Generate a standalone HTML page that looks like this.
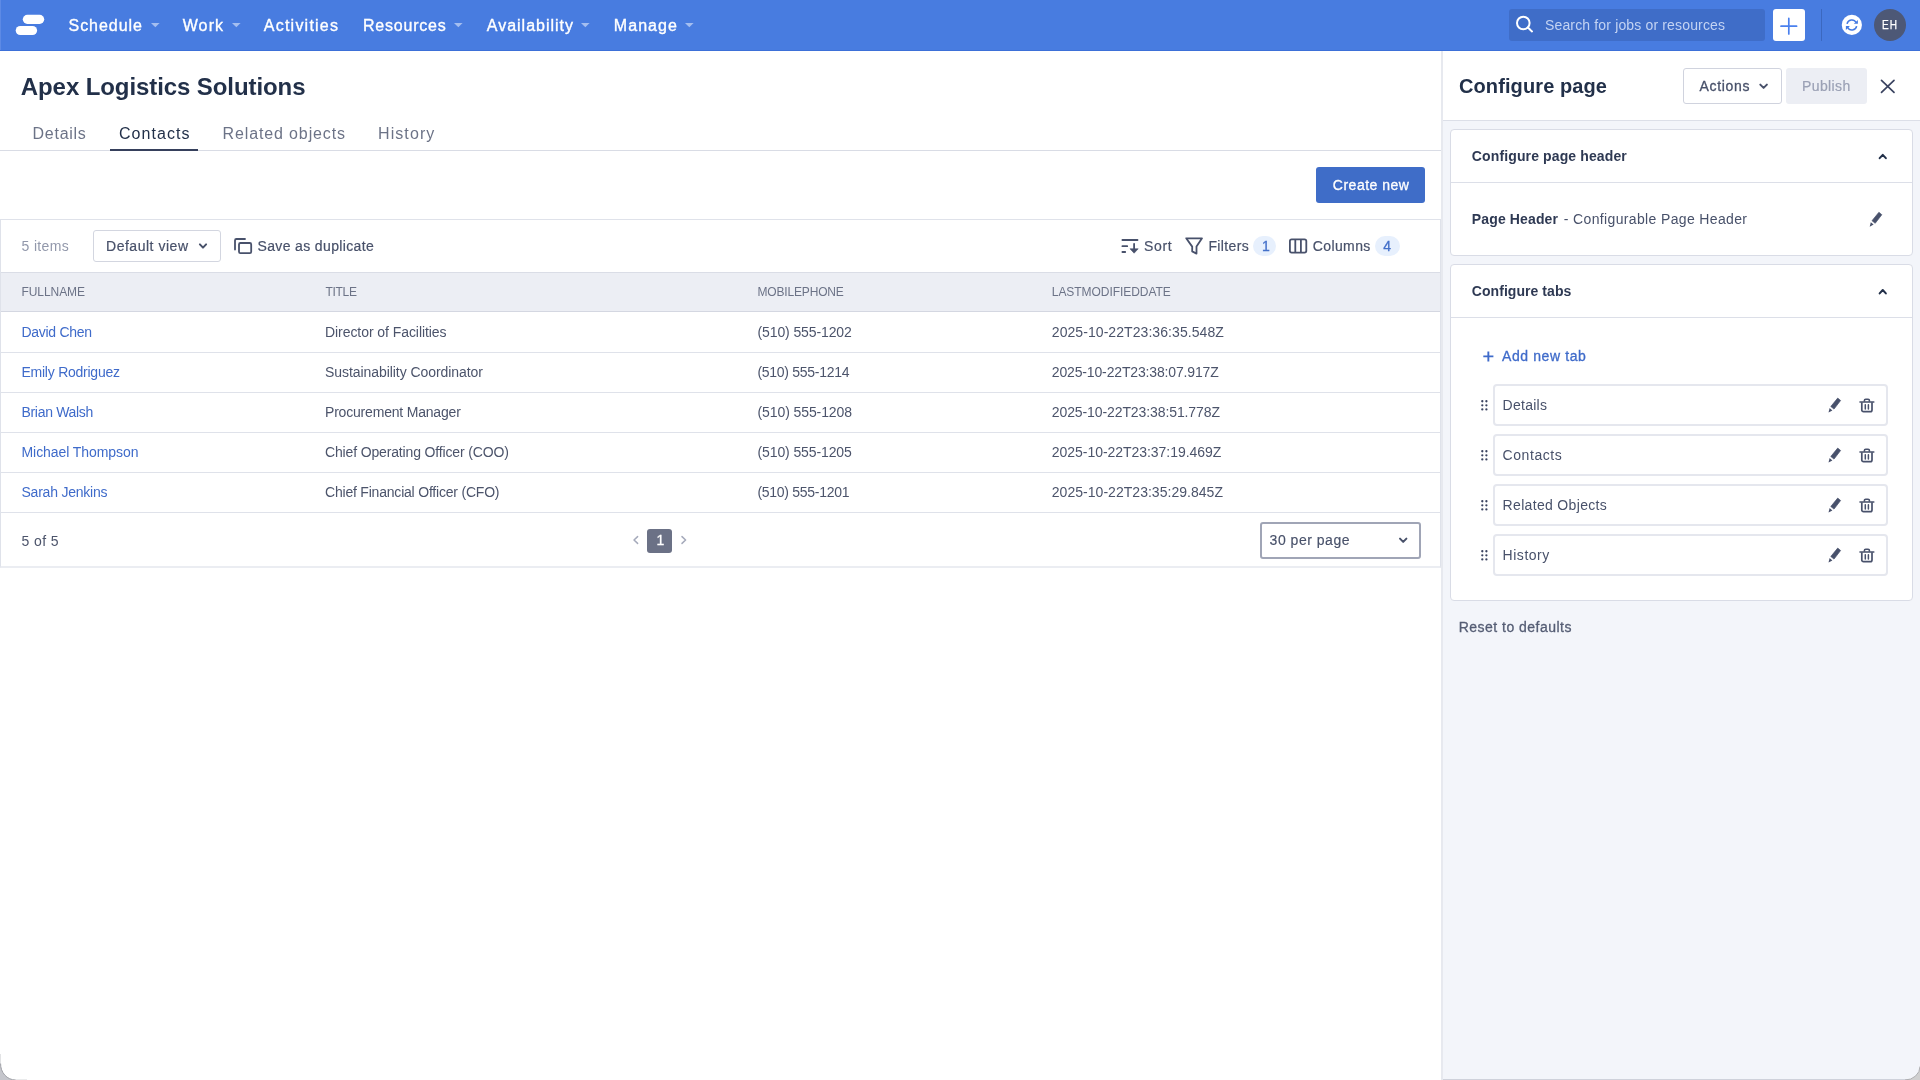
<!DOCTYPE html>
<html lang="en"><head><meta charset="utf-8"><title>Apex Logistics Solutions - Contacts</title><style>
html,body{margin:0;padding:0;}
body{width:1920px;height:1080px;overflow:hidden;background:#fff;position:relative;font-family:"Liberation Sans",sans-serif;}
.t{position:absolute;white-space:nowrap;line-height:1;display:block;}
</style></head>
<body>
<header style="will-change:transform;position:absolute;left:0;top:0;width:1920px;height:50px;background:#487ce0;border-bottom:1px solid #3d70d8;"><div style="position:absolute;left:0.00px;top:0.00px;width:1.00px;height:50.00px;background:#5d8ae5;"></div><svg style="position:absolute;left:15.00px;top:14.00px;overflow:visible;" width="30" height="22" viewBox="15 14 30 22" fill="none"><rect x="22.8" y="14.8" width="21.4" height="9.1" rx="4.55" fill="#fff"/><rect x="15.7" y="25.95" width="21.4" height="9.1" rx="4.55" fill="#fff"/></svg><span class="t" id="n0" style="left:68.50px;top:18.00px;font-size:16px;color:#fff;letter-spacing:0.969px;-webkit-text-stroke:0.35px #fff;">Schedule</span><svg style="position:absolute;left:151.20px;top:22.90px;overflow:visible;" width="9" height="4.5" viewBox="151.2 22.9 9 4.5" fill="none"><path d="M151.2,22.9 h8.6 l-4.3,4.3 z" fill="#fff" fill-opacity=".5"/></svg><span class="t" id="n1" style="left:182.70px;top:18.00px;font-size:16px;color:#fff;letter-spacing:1.118px;-webkit-text-stroke:0.35px #fff;">Work</span><svg style="position:absolute;left:231.60px;top:22.90px;overflow:visible;" width="9" height="4.5" viewBox="231.6 22.9 9 4.5" fill="none"><path d="M231.6,22.9 h8.6 l-4.3,4.3 z" fill="#fff" fill-opacity=".5"/></svg><span class="t" id="n2" style="left:263.80px;top:18.00px;font-size:16px;color:#fff;letter-spacing:1.231px;-webkit-text-stroke:0.35px #fff;">Activities</span><span class="t" id="n3" style="left:363.00px;top:18.00px;font-size:16px;color:#fff;letter-spacing:0.777px;-webkit-text-stroke:0.35px #fff;">Resources</span><svg style="position:absolute;left:453.90px;top:22.90px;overflow:visible;" width="9" height="4.5" viewBox="453.9 22.9 9 4.5" fill="none"><path d="M453.9,22.9 h8.6 l-4.3,4.3 z" fill="#fff" fill-opacity=".5"/></svg><span class="t" id="n4" style="left:486.80px;top:18.00px;font-size:16px;color:#fff;letter-spacing:0.991px;-webkit-text-stroke:0.35px #fff;">Availability</span><svg style="position:absolute;left:581.20px;top:22.90px;overflow:visible;" width="9" height="4.5" viewBox="581.2 22.9 9 4.5" fill="none"><path d="M581.2,22.9 h8.6 l-4.3,4.3 z" fill="#fff" fill-opacity=".5"/></svg><span class="t" id="n5" style="left:613.80px;top:18.00px;font-size:16px;color:#fff;letter-spacing:1.054px;-webkit-text-stroke:0.35px #fff;">Manage</span><svg style="position:absolute;left:685.40px;top:22.90px;overflow:visible;" width="9" height="4.5" viewBox="685.4 22.9 9 4.5" fill="none"><path d="M685.4,22.9 h8.6 l-4.3,4.3 z" fill="#fff" fill-opacity=".5"/></svg><div style="position:absolute;left:1508.50px;top:9.20px;width:256.00px;height:31.60px;background:#3f6dc8;border-radius:3px;"></div><svg style="position:absolute;left:1515.00px;top:15.00px;overflow:visible;" width="19" height="19" viewBox="1515 15 19 19" fill="none"><circle cx="1523.3" cy="23" r="6.3" stroke="#fff" stroke-width="2"/><path d="M1527.9,27.6 L1532,31.4" stroke="#fff" stroke-width="2" stroke-linecap="round"/></svg><span class="t" id="nsearch" style="left:1545.00px;top:18.00px;font-size:14px;color:#c3d3f3;letter-spacing:0.153px;">Search for jobs or resources</span><div style="position:absolute;left:1772.70px;top:9.10px;width:32.00px;height:31.80px;background:#fff;border-radius:3px;"></div><svg style="position:absolute;left:1780.00px;top:18.00px;overflow:visible;" width="18" height="18" viewBox="1780 18 18 18" fill="none"><path d="M1781,26.2 H1796.6 M1788.8,18.4 V34" stroke="#4a80ee" stroke-width="1.7" stroke-linecap="round"/></svg><div style="position:absolute;left:1820.80px;top:9.20px;width:1.00px;height:31.60px;background:#3b68c0;"></div><svg style="position:absolute;left:1841.00px;top:14.00px;overflow:visible;" width="22" height="22" viewBox="1841 14 22 22" fill="none"><circle cx="1851.85" cy="24.95" r="10.1" fill="#fff"/><path d="M1847.05,23.8 A4.85,4.85 0 0 1 1856.1,22.5" stroke="#447ae2" stroke-width="1.5"/><path d="M1857.9,20 V23.8 H1853.8 Z" fill="#447ae2"/><path d="M1856.65,26.1 A4.85,4.85 0 0 1 1847.6,27.4" stroke="#447ae2" stroke-width="1.5"/><path d="M1845.9,29.9 V26.1 H1849.9 Z" fill="#447ae2"/></svg><div style="position:absolute;left:1873.80px;top:8.90px;width:32.10px;height:32.10px;background:#4d5876;border-radius:50%;"></div><span class="t" id="nav_eh" style="left:1882.30px;top:19.00px;font-size:12px;color:#fff;letter-spacing:1.096px;-webkit-text-stroke:0.25px #fff;transform:scaleX(.84);transform-origin:0 50%;">EH</span></header>
<main style="will-change:transform;position:absolute;left:0;top:51px;width:1441px;height:1029px;background:#fff;"><span class="t" id="title" style="left:20.80px;top:24.00px;font-size:24px;color:#223049;letter-spacing:-0.087px;font-weight:700;">Apex Logistics Solutions</span><span class="t" id="tab0" style="left:32.60px;top:75.00px;font-size:16px;color:#6c7387;letter-spacing:0.716px;">Details</span><span class="t" id="tab1" style="left:119.00px;top:75.00px;font-size:16px;color:#223049;letter-spacing:1.037px;">Contacts</span><span class="t" id="tab2" style="left:222.60px;top:75.00px;font-size:16px;color:#6c7387;letter-spacing:0.865px;">Related objects</span><span class="t" id="tab3" style="left:378.00px;top:75.00px;font-size:16px;color:#6c7387;letter-spacing:1.086px;">History</span><div style="position:absolute;left:0.00px;top:99.00px;width:1441.00px;height:1.00px;background:#d9dce5;"></div><div style="position:absolute;left:110.00px;top:97.80px;width:88.10px;height:1.90px;background:#36405c;"></div><div style="position:absolute;left:1316.20px;top:116.20px;width:109.20px;height:35.80px;background:#3f6dc8;border-radius:3px;"><span class="t" id="createnew" style="left:16.60px;top:10.80px;font-size:14px;color:#fff;letter-spacing:0.512px;-webkit-text-stroke:0.3px #fff;">Create new</span></div><section style="position:absolute;left:0.00px;top:168.00px;width:1439.00px;height:346.00px;border:1px solid #dfe2ea;border-bottom:2px solid #ebedf2;background:#fff;"><span class="t" id="items5" style="left:20.50px;top:19.00px;font-size:14px;color:#9298ab;letter-spacing:0.362px;">5 items</span><div style="position:absolute;left:92.00px;top:10.30px;width:126.00px;height:29.40px;border:1px solid #d3d6e0;border-radius:3px;background:#fff;"></div><span class="t" id="defview" style="left:105.00px;top:19.00px;font-size:14px;color:#48516a;letter-spacing:0.521px;-webkit-text-stroke:0.2px #48516a;">Default view</span><svg style="position:absolute;left:197.00px;top:22.00px;overflow:visible;" width="10" height="8" viewBox="198 242 10 8" fill="none"><path d="M199.9,244.4 L203,247.6 L206.1,244.4" stroke="#48516a" stroke-width="2" stroke-linecap="round" stroke-linejoin="round"/></svg><svg style="position:absolute;left:232.00px;top:17.00px;overflow:visible;" width="20" height="18" viewBox="233 237 20 18" fill="none"><path d="M235,249.6 V240.4 a1.4,1.4 0 0 1 1.4,-1.4 H245" stroke="#48516b" stroke-width="1.8" stroke-linecap="round"/><rect x="239" y="243" width="12.2" height="10.1" rx="1.4" stroke="#48516b" stroke-width="1.8"/></svg><span class="t" id="savedup" style="left:256.50px;top:19.00px;font-size:14px;color:#48516a;letter-spacing:0.361px;-webkit-text-stroke:0.2px #48516a;">Save as duplicate</span><svg style="position:absolute;left:1120.00px;top:18.00px;overflow:visible;" width="18" height="16" viewBox="1121 238 18 16" fill="none"><path d="M1122.4,240 H1137.5 M1122.4,246.2 H1127.2 M1122.4,252 H1125.2 M1134.1,243.8 V250" stroke="#48516b" stroke-width="1.8" stroke-linecap="round"/><path d="M1130,248.8 H1138.2 L1134.1,253.2 Z" fill="#48516b" stroke="#48516b" stroke-width=".6" stroke-linejoin="round"/></svg><span class="t" id="sort" style="left:1143.00px;top:19.00px;font-size:14px;color:#48516a;letter-spacing:0.671px;-webkit-text-stroke:0.2px #48516a;">Sort</span><svg style="position:absolute;left:1184.00px;top:17.00px;overflow:visible;" width="18" height="18" viewBox="1185 237 18 18" fill="none"><path d="M1186.2,238.3 H1202 L1196.5,246.6 V253.6 L1192.2,251.4 V246.6 Z" stroke="#48516b" stroke-width="1.8" stroke-linejoin="round"/></svg><span class="t" id="filters" style="left:1207.40px;top:19.00px;font-size:14px;color:#48516a;letter-spacing:0.362px;-webkit-text-stroke:0.2px #48516a;">Filters</span><div style="position:absolute;left:1252.30px;top:16.00px;width:23.00px;height:20.00px;background:#e7f0fd;border-radius:10px;"></div><span class="t" id="b1" style="left:1261.00px;top:19.00px;font-size:14px;color:#4470c9;letter-spacing:0.000px;-webkit-text-stroke:0.3px #4470c9;">1</span><svg style="position:absolute;left:1287.00px;top:18.00px;overflow:visible;" width="20" height="16" viewBox="1288 238 20 16" fill="none"><rect x="1289.9" y="239.3" width="16.4" height="13.3" rx="1.8" stroke="#48516b" stroke-width="1.8"/><path d="M1295.3,239.3 V252.6 M1300.9,239.3 V252.6" stroke="#48516b" stroke-width="1.8"/></svg><span class="t" id="columns" style="left:1311.80px;top:19.00px;font-size:14px;color:#48516a;letter-spacing:0.375px;-webkit-text-stroke:0.2px #48516a;">Columns</span><div style="position:absolute;left:1374.30px;top:16.00px;width:25.00px;height:20.00px;background:#e7f0fd;border-radius:10px;"></div><span class="t" id="b4" style="left:1382.30px;top:19.00px;font-size:14px;color:#4470c9;letter-spacing:0.000px;-webkit-text-stroke:0.3px #4470c9;">4</span><div style="position:absolute;left:0.00px;top:52.00px;width:1439.00px;height:39.50px;background:#eceef4;border-top:1px solid #dadde6;border-bottom:1px solid #d4d7e1;box-sizing:border-box;"></div><span class="t" id="h0" style="left:20.50px;top:66.00px;font-size:12px;color:#6c7387;letter-spacing:-0.074px;">FULLNAME</span><span class="t" id="h1" style="left:324.50px;top:66.00px;font-size:12px;color:#6c7387;letter-spacing:-0.293px;">TITLE</span><span class="t" id="h2" style="left:756.50px;top:66.00px;font-size:12px;color:#6c7387;letter-spacing:-0.173px;">MOBILEPHONE</span><span class="t" id="h3" style="left:1050.80px;top:66.00px;font-size:12px;color:#6c7387;letter-spacing:-0.053px;">LASTMODIFIEDDATE</span><span class="t" id="r0a" style="left:20.50px;top:105.00px;font-size:14px;color:#3f6bca;letter-spacing:-0.295px;">David Chen</span><span class="t" id="r0b" style="left:324.00px;top:105.00px;font-size:14px;color:#4c546b;letter-spacing:-0.063px;">Director of Facilities</span><span class="t" id="r0c" style="left:756.50px;top:105.00px;font-size:14px;color:#4c546b;letter-spacing:-0.112px;">(510) 555-1202</span><span class="t" id="r0d" style="left:1050.80px;top:105.00px;font-size:14px;color:#4c546b;letter-spacing:0.067px;">2025-10-22T23:36:35.548Z</span><div style="position:absolute;left:0.00px;top:132.00px;width:1439.00px;height:1.00px;background:#dfe2ea;"></div><span class="t" id="r1a" style="left:20.50px;top:145.00px;font-size:14px;color:#3f6bca;letter-spacing:-0.246px;">Emily Rodriguez</span><span class="t" id="r1b" style="left:324.00px;top:145.00px;font-size:14px;color:#4c546b;letter-spacing:-0.061px;">Sustainability Coordinator</span><span class="t" id="r1c" style="left:756.50px;top:145.00px;font-size:14px;color:#4c546b;letter-spacing:-0.288px;">(510) 555-1214</span><span class="t" id="r1d" style="left:1050.80px;top:145.00px;font-size:14px;color:#4c546b;letter-spacing:-0.151px;">2025-10-22T23:38:07.917Z</span><div style="position:absolute;left:0.00px;top:172.00px;width:1439.00px;height:1.00px;background:#dfe2ea;"></div><span class="t" id="r2a" style="left:20.50px;top:185.00px;font-size:14px;color:#3f6bca;letter-spacing:-0.315px;">Brian Walsh</span><span class="t" id="r2b" style="left:324.00px;top:185.00px;font-size:14px;color:#4c546b;letter-spacing:-0.194px;">Procurement Manager</span><span class="t" id="r2c" style="left:756.50px;top:185.00px;font-size:14px;color:#4c546b;letter-spacing:-0.096px;">(510) 555-1208</span><span class="t" id="r2d" style="left:1050.80px;top:185.00px;font-size:14px;color:#4c546b;letter-spacing:-0.099px;">2025-10-22T23:38:51.778Z</span><div style="position:absolute;left:0.00px;top:212.00px;width:1439.00px;height:1.00px;background:#dfe2ea;"></div><span class="t" id="r3a" style="left:20.50px;top:225.00px;font-size:14px;color:#3f6bca;letter-spacing:-0.069px;">Michael Thompson</span><span class="t" id="r3b" style="left:324.00px;top:225.00px;font-size:14px;color:#4c546b;letter-spacing:-0.151px;">Chief Operating Officer (COO)</span><span class="t" id="r3c" style="left:756.50px;top:225.00px;font-size:14px;color:#4c546b;letter-spacing:-0.112px;">(510) 555-1205</span><span class="t" id="r3d" style="left:1050.80px;top:225.00px;font-size:14px;color:#4c546b;letter-spacing:-0.042px;">2025-10-22T23:37:19.469Z</span><div style="position:absolute;left:0.00px;top:252.00px;width:1439.00px;height:1.00px;background:#dfe2ea;"></div><span class="t" id="r4a" style="left:20.50px;top:265.00px;font-size:14px;color:#3f6bca;letter-spacing:-0.227px;">Sarah Jenkins</span><span class="t" id="r4b" style="left:324.00px;top:265.00px;font-size:14px;color:#4c546b;letter-spacing:-0.205px;">Chief Financial Officer (CFO)</span><span class="t" id="r4c" style="left:756.50px;top:265.00px;font-size:14px;color:#4c546b;letter-spacing:-0.288px;">(510) 555-1201</span><span class="t" id="r4d" style="left:1050.80px;top:265.00px;font-size:14px;color:#4c546b;letter-spacing:0.032px;">2025-10-22T23:35:29.845Z</span><div style="position:absolute;left:0.00px;top:292.00px;width:1439.00px;height:1.00px;background:#dfe2ea;"></div><span class="t" id="of5" style="left:20.50px;top:314.00px;font-size:14px;color:#4c546b;letter-spacing:0.394px;">5 of 5</span><svg style="position:absolute;left:631.00px;top:315.00px;overflow:visible;" width="8" height="10" viewBox="632 535 8 10" fill="none"><path d="M637.6,536.6 L634,540 L637.6,543.4" stroke="#a5aabb" stroke-width="1.5" stroke-linecap="round" stroke-linejoin="round"/></svg><div style="position:absolute;left:646.00px;top:308.60px;width:24.50px;height:24.00px;background:#6b7186;border-radius:3px;"></div><span class="t" id="pg1" style="left:655.50px;top:313.00px;font-size:14px;color:#fff;letter-spacing:0.000px;-webkit-text-stroke:0.3px #fff;">1</span><svg style="position:absolute;left:679.00px;top:315.00px;overflow:visible;" width="8" height="10" viewBox="680 535 8 10" fill="none"><path d="M682,536.6 L685.6,540 L682,543.4" stroke="#a5aabb" stroke-width="1.5" stroke-linecap="round" stroke-linejoin="round"/></svg><div style="position:absolute;left:1259.00px;top:302.00px;width:156.50px;height:32.50px;border:2px solid #a0a5b6;border-radius:3px;background:#fff;"></div><span class="t" id="perpage" style="left:1268.60px;top:313.00px;font-size:14px;color:#48516a;letter-spacing:0.517px;-webkit-text-stroke:0.15px #48516a;">30 per page</span><svg style="position:absolute;left:1397.00px;top:316.00px;overflow:visible;" width="10" height="8" viewBox="1398 536 10 8" fill="none"><path d="M1400,538.6 L1403.2,541.9 L1406.4,538.6" stroke="#48516a" stroke-width="2" stroke-linecap="round" stroke-linejoin="round"/></svg></section></main>
<aside style="will-change:transform;position:absolute;left:1441px;top:51px;width:477px;height:1029px;background:#f3f5fa;border-left:2px solid #e7e9ef;"><div style="position:absolute;left:0.00px;top:0.00px;width:477.00px;height:69.00px;background:#fff;border-bottom:1px solid #dcdfe8;"></div><span class="t" id="cfgpage" style="left:16.00px;top:25.00px;font-size:20px;color:#223049;letter-spacing:0.102px;font-weight:700;">Configure page</span><div style="position:absolute;left:239.50px;top:17.20px;width:97.20px;height:33.60px;border:1px solid #d0d3de;border-radius:3px;background:#fff;"></div><span class="t" id="actions" style="left:256.50px;top:28.00px;font-size:14px;color:#48516a;letter-spacing:0.696px;-webkit-text-stroke:0.3px #48516a;">Actions</span><svg style="position:absolute;left:316.00px;top:32.00px;overflow:visible;" width="10" height="8" viewBox="1759 83 10 8" fill="none"><path d="M1760.3,84.6 L1763.6,87.9 L1766.9,84.6" stroke="#48516a" stroke-width="2" stroke-linecap="round" stroke-linejoin="round"/></svg><div style="position:absolute;left:342.80px;top:17.20px;width:81.00px;height:35.60px;background:#eceef4;border-radius:3px;"></div><span class="t" id="publish" style="left:359.00px;top:28.00px;font-size:14px;color:#9ba1b5;letter-spacing:0.396px;-webkit-text-stroke:0.2px #9ba1b5;">Publish</span><svg style="position:absolute;left:437.00px;top:28.00px;overflow:visible;" width="16" height="15" viewBox="1880 79 16 15" fill="none"><path d="M1881.5,80.3 L1894,92.3 M1894,80.3 L1881.5,92.3" stroke="#3a4360" stroke-width="1.7" stroke-linecap="round"/></svg><section style="position:absolute;left:7.00px;top:78.00px;width:461.00px;height:125.00px;border:1px solid #d9dce6;border-radius:4px;background:#fff;"><span class="t" id="cph" style="left:20.80px;top:19.00px;font-size:14px;color:#2e3953;letter-spacing:0.127px;font-weight:700;">Configure page header</span><svg style="position:absolute;left:427.00px;top:23.00px;overflow:visible;" width="10" height="8" viewBox="1878 153 10 8" fill="none"><path d="M1879.65,158.20 L1882.75,154.80 L1885.85,158.20" stroke="#223049" stroke-width="2" stroke-linecap="round" stroke-linejoin="round"/></svg><div style="position:absolute;left:0.00px;top:52.00px;width:461.00px;height:1.00px;background:#dcdfe8;"></div><span class="t" id="ph" style="left:20.80px;top:82.00px;font-size:14px;color:#2e3953;letter-spacing:0.137px;font-weight:700;">Page Header</span><span class="t" id="ph2" style="left:112.80px;top:82.00px;font-size:14px;color:#48516a;letter-spacing:0.354px;">- Configurable Page Header</span><svg style="position:absolute;left:417.00px;top:81.00px;overflow:visible;" width="16" height="16" viewBox="1868 211 16 16" fill="none"><polygon points="1878.90,212.30 1881.80,214.70 1875.20,223.30 1872.00,220.70" fill="#48516b" stroke="#48516b" stroke-width=".7" stroke-linejoin="round"/><polygon points="1870.80,222.30 1873.60,224.60 1869.70,226.70" fill="#48516b"/></svg></section><section style="position:absolute;left:7.00px;top:213.00px;width:461.00px;height:335.00px;border:1px solid #d9dce6;border-radius:4px;background:#fff;"><span class="t" id="ctabs" style="left:20.80px;top:19.00px;font-size:14px;color:#2e3953;letter-spacing:0.055px;font-weight:700;">Configure tabs</span><svg style="position:absolute;left:427.00px;top:23.00px;overflow:visible;" width="10" height="8" viewBox="1878 288 10 8" fill="none"><path d="M1879.65,293.40 L1882.75,290.00 L1885.85,293.40" stroke="#223049" stroke-width="2" stroke-linecap="round" stroke-linejoin="round"/></svg><div style="position:absolute;left:0.00px;top:52.00px;width:461.00px;height:1.00px;background:#dcdfe8;"></div><svg style="position:absolute;left:32.00px;top:86.00px;overflow:visible;" width="11" height="11" viewBox="1483 351 11 11" fill="none"><path d="M1483.3,356.4 H1493.4 M1488.35,351.4 V361.4" stroke="#3f6bca" stroke-width="1.9"/></svg><span class="t" id="addtab" style="left:51.00px;top:84.00px;font-size:14px;color:#3f6bca;letter-spacing:0.596px;-webkit-text-stroke:0.3px #3f6bca;">Add new tab</span><svg style="position:absolute;left:29.00px;top:134.00px;overflow:visible;" width="9" height="12" viewBox="1480 399 9 12" fill="none"><circle cx="1482.3" cy="401.25" r="1.15" fill="#3a4360"/><circle cx="1482.3" cy="405.30" r="1.15" fill="#3a4360"/><circle cx="1482.3" cy="409.40" r="1.15" fill="#3a4360"/><circle cx="1486.4" cy="401.25" r="1.15" fill="#3a4360"/><circle cx="1486.4" cy="405.30" r="1.15" fill="#3a4360"/><circle cx="1486.4" cy="409.40" r="1.15" fill="#3a4360"/></svg><div style="position:absolute;left:42.00px;top:119.00px;width:391.00px;height:38.00px;border:2px solid #e5e7ee;border-radius:4px;background:#fff;"><span class="t" id="it0" style="left:7.60px;top:12.00px;font-size:14px;color:#48516a;letter-spacing:0.267px;">Details</span><svg style="position:absolute;left:332.00px;top:11.00px;overflow:visible;" width="16" height="16" viewBox="1827 397 16 16" fill="none"><polygon points="1837.70,398.10 1840.60,400.50 1834.00,409.10 1830.80,406.50" fill="#48516b" stroke="#48516b" stroke-width=".7" stroke-linejoin="round"/><polygon points="1829.60,408.10 1832.40,410.40 1828.50,412.50" fill="#48516b"/></svg><svg style="position:absolute;left:364.00px;top:11.00px;overflow:visible;" width="16" height="16" viewBox="1859 397 16 16" fill="none"><path d="M1860,402.00 H1873.8" stroke="#48516b" stroke-width="1.6" stroke-linecap="round"/><path d="M1864.4,401.70 V400.50 a1.3,1.3 0 0 1 1.3,-1.3 h2.4 a1.3,1.3 0 0 1 1.3,1.3 V401.70" stroke="#48516b" stroke-width="1.6"/><path d="M1861.8,402.30 V410.00 a1.7,1.7 0 0 0 1.7,1.7 h6.8 a1.7,1.7 0 0 0 1.7,-1.7 V402.30" stroke="#48516b" stroke-width="1.7"/><path d="M1865.3,404.70 V409.00 M1868.4,404.70 V409.00" stroke="#48516b" stroke-width="1.5" stroke-linecap="round"/></svg></div><svg style="position:absolute;left:29.00px;top:184.00px;overflow:visible;" width="9" height="12" viewBox="1480 449 9 12" fill="none"><circle cx="1482.3" cy="451.25" r="1.15" fill="#3a4360"/><circle cx="1482.3" cy="455.30" r="1.15" fill="#3a4360"/><circle cx="1482.3" cy="459.40" r="1.15" fill="#3a4360"/><circle cx="1486.4" cy="451.25" r="1.15" fill="#3a4360"/><circle cx="1486.4" cy="455.30" r="1.15" fill="#3a4360"/><circle cx="1486.4" cy="459.40" r="1.15" fill="#3a4360"/></svg><div style="position:absolute;left:42.00px;top:169.00px;width:391.00px;height:38.00px;border:2px solid #e5e7ee;border-radius:4px;background:#fff;"><span class="t" id="it1" style="left:7.60px;top:12.00px;font-size:14px;color:#48516a;letter-spacing:0.564px;">Contacts</span><svg style="position:absolute;left:332.00px;top:11.00px;overflow:visible;" width="16" height="16" viewBox="1827 447 16 16" fill="none"><polygon points="1837.70,448.10 1840.60,450.50 1834.00,459.10 1830.80,456.50" fill="#48516b" stroke="#48516b" stroke-width=".7" stroke-linejoin="round"/><polygon points="1829.60,458.10 1832.40,460.40 1828.50,462.50" fill="#48516b"/></svg><svg style="position:absolute;left:364.00px;top:11.00px;overflow:visible;" width="16" height="16" viewBox="1859 447 16 16" fill="none"><path d="M1860,452.00 H1873.8" stroke="#48516b" stroke-width="1.6" stroke-linecap="round"/><path d="M1864.4,451.70 V450.50 a1.3,1.3 0 0 1 1.3,-1.3 h2.4 a1.3,1.3 0 0 1 1.3,1.3 V451.70" stroke="#48516b" stroke-width="1.6"/><path d="M1861.8,452.30 V460.00 a1.7,1.7 0 0 0 1.7,1.7 h6.8 a1.7,1.7 0 0 0 1.7,-1.7 V452.30" stroke="#48516b" stroke-width="1.7"/><path d="M1865.3,454.70 V459.00 M1868.4,454.70 V459.00" stroke="#48516b" stroke-width="1.5" stroke-linecap="round"/></svg></div><svg style="position:absolute;left:29.00px;top:234.00px;overflow:visible;" width="9" height="12" viewBox="1480 499 9 12" fill="none"><circle cx="1482.3" cy="501.25" r="1.15" fill="#3a4360"/><circle cx="1482.3" cy="505.30" r="1.15" fill="#3a4360"/><circle cx="1482.3" cy="509.40" r="1.15" fill="#3a4360"/><circle cx="1486.4" cy="501.25" r="1.15" fill="#3a4360"/><circle cx="1486.4" cy="505.30" r="1.15" fill="#3a4360"/><circle cx="1486.4" cy="509.40" r="1.15" fill="#3a4360"/></svg><div style="position:absolute;left:42.00px;top:219.00px;width:391.00px;height:38.00px;border:2px solid #e5e7ee;border-radius:4px;background:#fff;"><span class="t" id="it2" style="left:7.60px;top:12.00px;font-size:14px;color:#48516a;letter-spacing:0.328px;">Related Objects</span><svg style="position:absolute;left:332.00px;top:11.00px;overflow:visible;" width="16" height="16" viewBox="1827 497 16 16" fill="none"><polygon points="1837.70,498.10 1840.60,500.50 1834.00,509.10 1830.80,506.50" fill="#48516b" stroke="#48516b" stroke-width=".7" stroke-linejoin="round"/><polygon points="1829.60,508.10 1832.40,510.40 1828.50,512.50" fill="#48516b"/></svg><svg style="position:absolute;left:364.00px;top:11.00px;overflow:visible;" width="16" height="16" viewBox="1859 497 16 16" fill="none"><path d="M1860,502.00 H1873.8" stroke="#48516b" stroke-width="1.6" stroke-linecap="round"/><path d="M1864.4,501.70 V500.50 a1.3,1.3 0 0 1 1.3,-1.3 h2.4 a1.3,1.3 0 0 1 1.3,1.3 V501.70" stroke="#48516b" stroke-width="1.6"/><path d="M1861.8,502.30 V510.00 a1.7,1.7 0 0 0 1.7,1.7 h6.8 a1.7,1.7 0 0 0 1.7,-1.7 V502.30" stroke="#48516b" stroke-width="1.7"/><path d="M1865.3,504.70 V509.00 M1868.4,504.70 V509.00" stroke="#48516b" stroke-width="1.5" stroke-linecap="round"/></svg></div><svg style="position:absolute;left:29.00px;top:284.00px;overflow:visible;" width="9" height="12" viewBox="1480 549 9 12" fill="none"><circle cx="1482.3" cy="551.25" r="1.15" fill="#3a4360"/><circle cx="1482.3" cy="555.30" r="1.15" fill="#3a4360"/><circle cx="1482.3" cy="559.40" r="1.15" fill="#3a4360"/><circle cx="1486.4" cy="551.25" r="1.15" fill="#3a4360"/><circle cx="1486.4" cy="555.30" r="1.15" fill="#3a4360"/><circle cx="1486.4" cy="559.40" r="1.15" fill="#3a4360"/></svg><div style="position:absolute;left:42.00px;top:269.00px;width:391.00px;height:38.00px;border:2px solid #e5e7ee;border-radius:4px;background:#fff;"><span class="t" id="it3" style="left:7.60px;top:12.00px;font-size:14px;color:#48516a;letter-spacing:0.523px;">History</span><svg style="position:absolute;left:332.00px;top:11.00px;overflow:visible;" width="16" height="16" viewBox="1827 547 16 16" fill="none"><polygon points="1837.70,548.10 1840.60,550.50 1834.00,559.10 1830.80,556.50" fill="#48516b" stroke="#48516b" stroke-width=".7" stroke-linejoin="round"/><polygon points="1829.60,558.10 1832.40,560.40 1828.50,562.50" fill="#48516b"/></svg><svg style="position:absolute;left:364.00px;top:11.00px;overflow:visible;" width="16" height="16" viewBox="1859 547 16 16" fill="none"><path d="M1860,552.00 H1873.8" stroke="#48516b" stroke-width="1.6" stroke-linecap="round"/><path d="M1864.4,551.70 V550.50 a1.3,1.3 0 0 1 1.3,-1.3 h2.4 a1.3,1.3 0 0 1 1.3,1.3 V551.70" stroke="#48516b" stroke-width="1.6"/><path d="M1861.8,552.30 V560.00 a1.7,1.7 0 0 0 1.7,1.7 h6.8 a1.7,1.7 0 0 0 1.7,-1.7 V552.30" stroke="#48516b" stroke-width="1.7"/><path d="M1865.3,554.70 V559.00 M1868.4,554.70 V559.00" stroke="#48516b" stroke-width="1.5" stroke-linecap="round"/></svg></div></section><span class="t" id="reset" style="left:15.70px;top:569.00px;font-size:14px;color:#555d74;letter-spacing:0.484px;-webkit-text-stroke:0.3px #555d74;">Reset to defaults</span><div style="position:absolute;left:0.00px;top:1028.00px;width:477.00px;height:1.00px;background:#cfd2db;"></div></aside>
<svg style="position:absolute;left:0.00px;top:1050.00px;overflow:visible;" width="30" height="30" viewBox="0 1050 30 30" fill="none"><path d="M0,1063.5 H0.6 A15,16 0 0 0 15.6,1080 H0 Z" fill="#c5c6cc"/><path d="M0.6,1063.5 A15,16 0 0 0 15.6,1080" stroke="#9fa0a6" stroke-width="1"/><path d="M0,1054 H0.7 V1064 H0 Z" fill="#c5c6cc" fill-opacity=".7"/><path d="M15,1079.4 H27 V1080 H15 Z" fill="#c5c6cc" fill-opacity=".6"/></svg><svg style="position:absolute;left:1890.00px;top:1050.00px;overflow:visible;" width="30" height="30" viewBox="1890 1050 30 30" fill="none"><path d="M1920,1066.5 A15,13.5 0 0 1 1905,1080 H1920 Z" fill="#d0d0d0"/><path d="M1920,1066.5 A15,13.5 0 0 1 1905,1080" stroke="#adadaf" stroke-width="1"/></svg>
</body></html>
